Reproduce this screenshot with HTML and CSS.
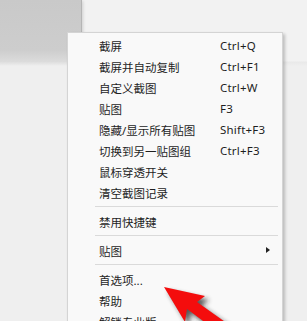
FILE: index.html
```html
<!DOCTYPE html>
<html lang="zh-CN">
<head>
  <meta charset="UTF-8">
  <meta name="viewport" content="width=device-width, initial-scale=1.0">
  <title>截图菜单</title>
  <link rel="stylesheet" href="styles.css">
</head>
<body>
  <div class="desk">
    <div class="win-back"></div>
    <div class="win-edge"></div>

    <ul class="menu">
      <li class="item"><span>截屏</span><span class="key">Ctrl+Q</span></li>
      <li class="item"><span>截屏并自动复制</span><span class="key">Ctrl+F1</span></li>
      <li class="item"><span>自定义截图</span><span class="key">Ctrl+W</span></li>
      <li class="item"><span>贴图</span><span class="key">F3</span></li>
      <li class="item"><span>隐藏/显示所有贴图</span><span class="key">Shift+F3</span></li>
      <li class="item"><span>切换到另一贴图组</span><span class="key">Ctrl+F3</span></li>
      <li class="item"><span>鼠标穿透开关</span></li>
      <li class="item"><span>清空截图记录</span></li>
      <li class="sep"></li>
      <li class="item"><span>禁用快捷键</span></li>
      <li class="sep"></li>
      <li class="item"><span>贴图</span><span class="sub"></span></li>
      <li class="sep"></li>
      <li class="item"><span>首选项...</span></li>
      <li class="item"><span>帮助</span></li>
      <li class="item"><span>解锁专业版</span></li>
    </ul>

    <!-- red pointer drawn over the menu -->
    <svg class="arrow" width="307" height="321" viewBox="0 0 307 321">
      <defs>
        <filter id="shade" x="-30%" y="-30%" width="160%" height="160%">
          <feGaussianBlur stdDeviation="2.5"/>
        </filter>
      </defs>
      <polygon points="168,291 209,300 201,306 232,328 222,336 191,313 189,326" fill="#222" opacity="0.75" filter="url(#shade)"/>
      <polygon points="164,287 205,296 197,302 228,324 218,332 187,309 185,322" fill="#f40d0d"/>
    </svg>
  </div>
</body>
</html>
```

FILE: styles.css
```css
body {
  margin: 0;
  padding: 0;
  background-color: #efefef;
  font-family: "Noto Sans", "Noto Sans CJK SC", sans-serif;
  color: #1e1e1e;
}

.desk {
  position: relative;
  width: 307px;
  height: 321px;
  overflow: hidden;
  background: linear-gradient(#f2f2f2 0, #f2f2f2 61px, #e9e9e9 62px, #efefef 66px);
}

/* grey window behind, top left */
.win-back {
  position: absolute;
  left: 0;
  top: 0;
  width: 81px;
  height: 62px;
  background: linear-gradient(to bottom, #c9c9c9 0, #cdcdcd 50px, #dcdcdc 62px);
  border-right: 1px solid #b5b5b5;
  box-shadow: 1px 1px 3px rgba(0, 0, 0, 0.15);
}

.win-edge {
  position: absolute;
  left: 0;
  top: 62px;
  width: 82px;
  height: 4px;
  background: linear-gradient(#dedede, #efefef);
}

.menu {
  position: absolute;
  left: 67px;
  top: 32px;
  width: 214px;
  height: 310px;
  margin: 0;
  padding: 2px 0 0;
  list-style: none;
  background-color: #f9f9f9;
  border: 1px solid #d4d4d4;
  box-shadow: 2px 2px 3px rgba(0, 0, 0, 0.22);
  font-size: 11.5px;
}

.item {
  display: grid;
  grid-template-columns: 121px auto;
  align-items: center;
  height: 21px;
  padding-left: 31px;
  position: relative;
}

.key {
  font-size: 11.5px;
  letter-spacing: 0.2px;
}

.sep {
  height: 1px;
  margin: 3px 4px 4px 27px;
  background-color: #dadada;
}

.sub {
  position: absolute;
  left: 198px;
  top: 7px;
  width: 0;
  height: 0;
  border-top: 3.5px solid transparent;
  border-bottom: 3.5px solid transparent;
  border-left: 4px solid #222;
}

.arrow {
  position: absolute;
  left: 0;
  top: 0;
}
```
